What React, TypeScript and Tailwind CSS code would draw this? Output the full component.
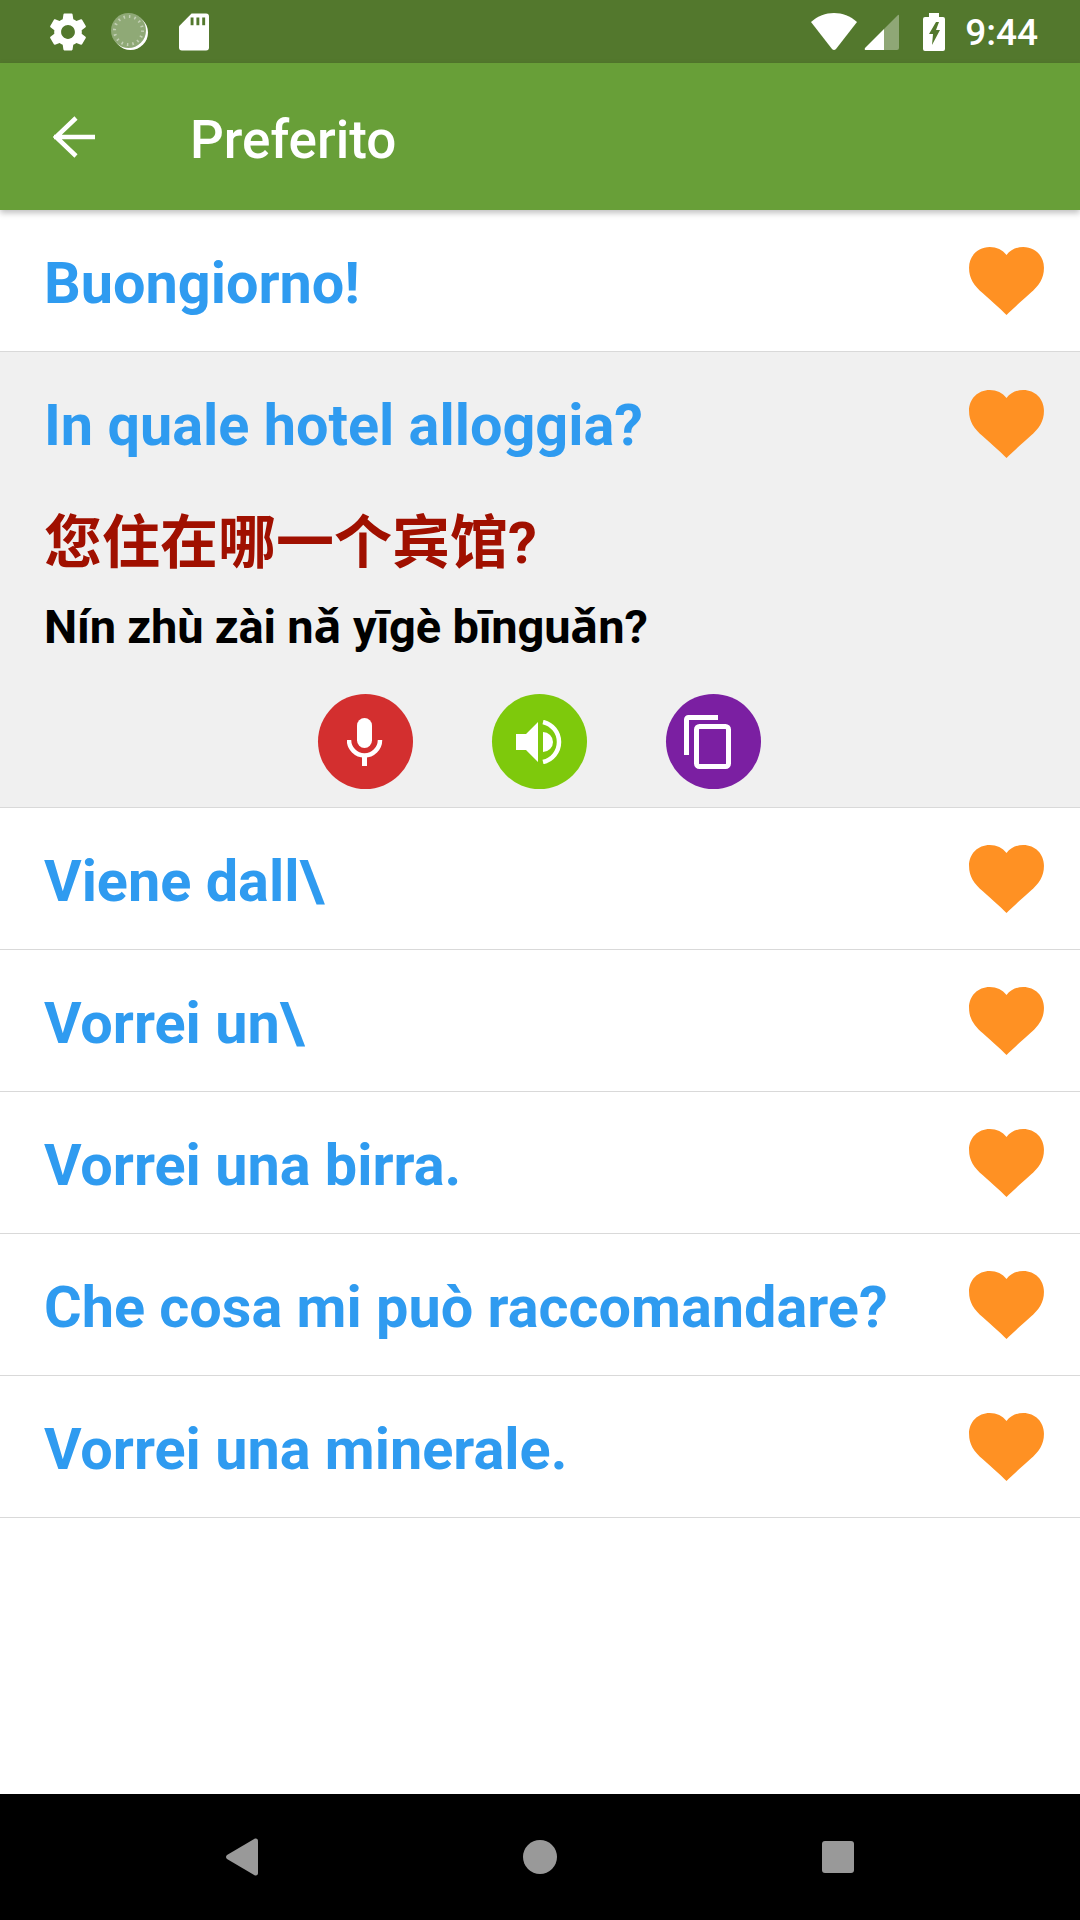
const Heart = () => (
  <svg width="75" height="69" viewBox="0 0 76 70" className="shrink-0 mt-[2px]">
    <path d="M38 69 C32 63 24 56 14 47 C5 39 0 32 0 21 C0 9 9 0 21 0 C28 0 34 3 38 8 C42 3 48 0 55 0 C67 0 76 9 76 21 C76 32 71 39 62 47 C52 56 44 63 38 69 Z" fill="#ff9123" />
  </svg>
);

const Row = ({ text }: { text: string }) => (
  <div className="h-[142px] border-b border-[#d9d9d9] flex items-center justify-between pl-[44px] pr-[36px]">
    <span className="text-[57.6px] font-bold text-[#2f9bf0] leading-none pt-[6px]">{text}</span>
    <Heart />
  </div>
);

export default function App() {
  return (
    <div className="w-[1080px] h-[1920px] flex flex-col bg-white overflow-hidden font-['Roboto',sans-serif]">
      <div className="h-[63px] bg-[#53782d] flex items-center justify-between pl-[45px] pr-[42px] shrink-0">
        <div className="flex items-center">
          <svg width="46" height="46" viewBox="0 0 24 24" fill="white">
            <path d="M19.14 12.94c.04-.3.06-.61.06-.94 0-.32-.02-.64-.07-.94l2.03-1.58a.49.49 0 0 0 .12-.61l-1.92-3.32a.488.488 0 0 0-.59-.22l-2.39.96c-.5-.38-1.03-.7-1.62-.94l-.36-2.54a.484.484 0 0 0-.48-.41h-3.84c-.24 0-.43.17-.47.41l-.36 2.54c-.59.24-1.13.57-1.62.94l-2.39-.96c-.22-.08-.47 0-.59.22L2.74 8.87c-.12.21-.08.47.12.61l2.03 1.58c-.05.3-.09.63-.09.94s.02.64.07.94l-2.03 1.58a.49.49 0 0 0-.12.61l1.92 3.32c.12.22.37.29.59.22l2.39-.96c.5.38 1.03.7 1.62.94l.36 2.54c.05.24.24.41.48.41h3.84c.24 0 .44-.17.47-.41l.36-2.54c.59-.24 1.13-.56 1.62-.94l2.39.96c.22.08.47 0 .59-.22l1.92-3.32c.12-.22.07-.47-.12-.61l-2.01-1.58zM12 15.6c-1.98 0-3.6-1.62-3.6-3.6s1.62-3.6 3.6-3.6 3.6 1.62 3.6 3.6-1.62 3.6-3.6 3.6z" />
          </svg>
          <svg width="38" height="38" viewBox="0 0 38 38" className="ml-[20px]">
            <circle cx="19.5" cy="19.5" r="17.5" fill="white" />
            <circle cx="17.5" cy="17.5" r="17.5" fill="#8fa976" />
            <circle cx="17.5" cy="17.5" r="14" fill="none" stroke="#c3d0b5" strokeWidth="3" strokeDasharray="1.5 4" />
          </svg>
          <svg width="30" height="38" viewBox="0 0 31 38" className="ml-[30px]">
            <path d="M13 0 H28 a3 3 0 0 1 3 3 V35 a3 3 0 0 1 -3 3 H3 a3 3 0 0 1 -3 -3 V13 Z" fill="white" />
            <rect x="12" y="4" width="3" height="8" fill="#53782d" />
            <rect x="18" y="4" width="3" height="8" fill="#53782d" />
            <rect x="24" y="4" width="3" height="8" fill="#53782d" />
          </svg>
        </div>
        <div className="flex items-center">
          <svg width="46" height="38" viewBox="0 0 46 38">
            <path d="M0 9 C13 -3 33 -3 46 9 L25 36 Q23 38 21 36 Z" fill="white" />
          </svg>
          <svg width="36" height="36" viewBox="0 0 36 36" className="ml-[7px]">
            <path d="M20 36 H2 Q0 36 1 34 L20 15 Z" fill="white" />
            <path d="M20 15 L34 1 Q35 0 35 2 V34 Q35 36 33 36 H20 Z" fill="white" fillOpacity="0.35" />
          </svg>
          <svg width="22" height="38" viewBox="0 0 22 38" className="ml-[23px]">
            <path d="M6 0 H16 V4 H20 a2 2 0 0 1 2 2 V36 a2 2 0 0 1 -2 2 H2 a2 2 0 0 1 -2 -2 V6 a2 2 0 0 1 2 -2 H6 Z" fill="white" />
            <path d="M9 32 L10 21 H6 L13 9 H16 L13 17 H17 Z" fill="#53782d" />
          </svg>
          <span className="ml-[20px] text-[37px] font-medium text-white leading-none pt-[2px]">9:44</span>
        </div>
      </div>
      <div className="h-[147px] bg-[#689f38] flex items-center pl-[53px] shrink-0 shadow-[0_3px_6px_rgba(0,0,0,0.25)] relative">
        <svg width="42" height="42" viewBox="0 0 42 42" fill="none" stroke="white" strokeWidth="4.5">
          <path d="M1 21 H42 M23 2 L3 21 L23 40" />
        </svg>
        <span className="ml-[95px] text-[53px] font-medium text-white leading-none mt-[7px]">Preferito</span>
      </div>
      <Row text="Buongiorno!" />
      <div className="h-[456px] border-b border-[#d9d9d9] bg-[#f0f0f0] flex flex-col pl-[44px] pr-[36px]">
        <div className="h-[142px] flex items-center justify-between shrink-0">
          <span className="text-[57.6px] font-bold text-[#2f9bf0] leading-none pt-[6px]">In quale hotel alloggia?</span>
          <Heart />
        </div>
        <div className="text-[58px] font-bold text-[#a01000] leading-none mt-[20px] font-['Roboto','Noto_Sans_CJK_SC',sans-serif]">您住在哪一个宾馆?</div>
        <div className="text-[47px] font-bold text-black leading-none mt-[31px] tracking-[-0.18px] font-['Roboto','Noto_Sans',sans-serif]">Nín zhù zài nǎ yīgè bīnguǎn?</div>
        <div className="flex justify-center gap-[79px] mt-[44px] mr-[10px]">
          <div className="w-[95px] h-[95px] rounded-full bg-[#d32f2f] flex items-center justify-center">
            <svg width="36" height="48" viewBox="0 0 36 48" fill="none">
              <rect x="10" y="0" width="15" height="30" rx="7.5" fill="white" />
              <path d="M2 22 A15.5 15.5 0 0 0 33 22" stroke="white" strokeWidth="4.5" />
              <path d="M17.5 37 V48" stroke="white" strokeWidth="5" />
            </svg>
          </div>
          <div className="w-[95px] h-[95px] rounded-full bg-[#7ec90c] flex items-center justify-center">
            <svg width="46" height="44" viewBox="0 0 46 44" fill="white">
              <path d="M0 14 H10 L22 2 V42 L10 30 H0 Z" />
              <path d="M27 12 A10 10 0 0 1 27 32 Z" />
              <path d="M27 2 A20.5 20.5 0 0 1 27 42" fill="none" stroke="white" strokeWidth="4.5" />
            </svg>
          </div>
          <div className="w-[95px] h-[95px] rounded-full bg-[#7b1fa2] flex items-center justify-center">
            <svg width="47" height="54" viewBox="0 0 47 54" fill="none" stroke="white" strokeWidth="5" className="mr-[12px]">
              <path d="M2.5 40 V4.5 a2 2 0 0 1 2 -2 H34" />
              <rect x="12.5" y="11.5" width="32" height="40" rx="3" />
            </svg>
          </div>
        </div>
      </div>
      <Row text="Viene dall\" />
      <Row text="Vorrei un\" />
      <Row text="Vorrei una birra." />
      <Row text="Che cosa mi può raccomandare?" />
      <Row text="Vorrei una minerale." />
      <div className="flex-1" />
      <div className="h-[126px] bg-black flex items-center justify-center gap-[265px] shrink-0">
        <svg width="32" height="38" viewBox="0 0 32 36" preserveAspectRatio="none">
          <path d="M1 16 L29 0.5 Q32 0 32 3 V33 Q32 36 29 35.5 L1 20 Q-1 18 1 16 Z" fill="#999" />
        </svg>
        <div className="w-[34px] h-[34px] rounded-full bg-[#999]" />
        <div className="w-[32px] h-[32px] rounded-[3px] bg-[#999]" />
      </div>
    </div>
  );
}
